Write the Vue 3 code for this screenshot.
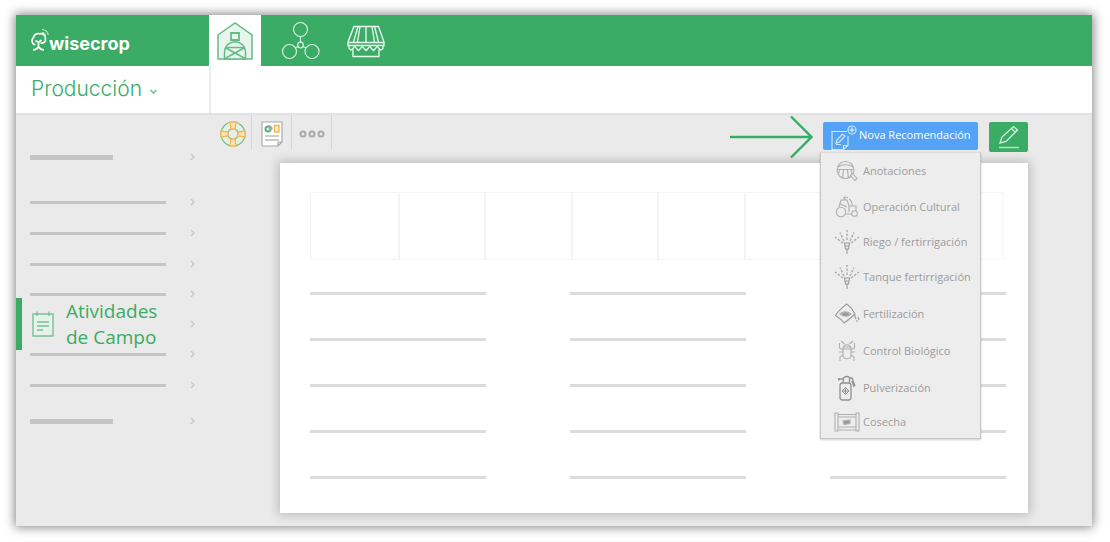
<script setup>
const entries = [
  { kind: 'thick' },
  { kind: 'thin' },
  { kind: 'thin' },
  { kind: 'thin' },
  { kind: 'thin' },
  { kind: 'active' },
  { kind: 'thin' },
  { kind: 'thin' },
  { kind: 'thick' },
]
const actions = [
  { label: 'Anotaciones', icon: 'notes' },
  { label: 'Operación Cultural', icon: 'tractor' },
  { label: 'Riego / fertirrigación', icon: 'spray' },
  { label: 'Tanque fertirrigación', icon: 'spray' },
  { label: 'Fertilización', icon: 'bag' },
  { label: 'Control Biológico', icon: 'bug' },
  { label: 'Pulverización', icon: 'bottle' },
  { label: 'Cosecha', icon: 'crate' },
]
</script>

<template>
  <div class="page">
    <div class="frame">
      <header class="top">
        <a href="#" class="brand">
          <svg width="18" height="24" viewBox="0 0 18 24" fill="none" stroke="#fff" stroke-width="1.7">
            <path d="M4.500 16.500H2.800C.5 14.500 .5 11 2.500 9.500C3 6.500 6 5 8.500 5.800C12 5 15 8 14.300 10.500C15.500 13.500 12.500 15.500 9.500 15" />
            <path d="M4.500 12.500L7.500 14.500L10.500 12M7.500 14V19M2 21.800C5 21.800 6.500 20.500 7.500 18.500C8.500 20.500 10 21.800 13 21.800" />
            <path d="M11 4.500C13 4.500 14.500 6 14.500 7.500M11 1.500C14.500 1.500 17.200 4 17.200 7" stroke-width="1.200" opacity=".7" />
          </svg>
          <span>wisecrop</span>
        </a>
        <nav class="tabs">
          <a href="#" class="tab current" aria-label="Granja">
            <svg width="36" height="40" viewBox="0 0 36 40" fill="#e8f5ed" stroke="#65bc87" stroke-width="1.500">
              <path d="M1 14L18 2L35 14V38H1Z" />
              <path d="M14 12H22V19H14Z" stroke-width="1.800" />
              <path d="M7.500 38V32C7.500 17 28.500 17 28.500 32V38Z" />
              <path d="M9 26.500H27M9 27L28 37.500M27 27L8 37.500" />
            </svg>
          </a>
          <a href="#" class="tab" aria-label="Red">
            <svg width="40" height="40" viewBox="0 0 40 40" fill="none" stroke="#d8f0e1" stroke-width="1.200">
              <circle cx="20.500" cy="8.500" r="7" /><circle cx="9.500" cy="30.500" r="7" /><circle cx="32" cy="30.500" r="7" />
              <circle cx="20.500" cy="24" r="2.800" /><path d="M20.500 15.500V21M18 25.500L15 27M23 25.500L26 27" />
            </svg>
          </a>
          <a href="#" class="tab" aria-label="Mercado">
            <svg width="38" height="34" viewBox="0 0 38 34" fill="none" stroke="#e6f6ec" stroke-width="1.400">
              <path d="M7 2.500H31.500L37 18V21.500H1V18ZM1.500 18.500H36.500M13 2.500L10.500 18M19 2.500V18M25 2.500L27.500 18M11 2.500L6.500 18M27.500 2.500L31.500 18" />
              <path d="M2 21.500V24.500L4 26L6 24.500C7.500 22 8 22 9.500 24.500L11.500 26.500L13.500 24.500C15 22 15.500 22 17 24.500L19 26.500L21 24.500C22.500 22 23 22 24.500 24.500L26.500 26.500L28.500 24.500C30 22 30.500 22 32 24.500L34 26L36 24.500V21.500M6 25.500V32.500H32V25.500" />
            </svg>
          </a>
        </nav>
      </header>

      <div class="section">
        <button class="area" type="button">
          <span>Producción</span>
          <svg width="9" height="6" viewBox="0 0 9 6" fill="none" stroke="#76c695" stroke-width="1.700"><path d="M1.500 1L4.500 4L7.500 1" /></svg>
        </button>
      </div>

      <div class="body">
        <aside class="side">
          <ul>
            <li v-for="(e, i) in entries" :key="i" :class="e.kind">
              <a v-if="e.kind === 'active'" href="#" class="selected">
                <svg width="22" height="26" viewBox="0 0 22 26" fill="#e6f2e9" stroke="#78c294" stroke-width="1.400">
                  <path d="M1 3H21V25H1Z" /><path d="M5 .5V5M17 .5V5" />
                  <path d="M5 11H17M5 15H17M5 19H11" />
                </svg>
                <span>Atividades<br />de Campo</span>
              </a>
              <span v-else class="bar"></span>
              <svg class="chev" width="5" height="8" viewBox="0 0 5 8" fill="none" stroke="#c9c9c9" stroke-width="1.500"><path d="M1 1L4 4L1 7" /></svg>
            </li>
          </ul>
        </aside>

        <main class="main">
          <div class="toolbar">
            <button class="tool" type="button" aria-label="Ayuda">
              <svg width="26" height="26" viewBox="0 0 26 26" fill="none" stroke="#72be8d" stroke-width="1.200">
                <circle cx="13" cy="13" r="12" fill="#e5f0e5" /><circle cx="13" cy="13" r="5.300" fill="#ebebeb" />
                <g fill="#fbe5bd" stroke="#f9b64d" stroke-width="1.300">
                  <path d="M10 1H16L15 8H11ZM10 25H16L15 18H11ZM1 10V16L8 15V11ZM25 10V16L18 15V11Z" />
                </g>
              </svg>
            </button>
            <button class="tool" type="button" aria-label="Informe">
              <svg width="22" height="26" viewBox="0 0 22 26" fill="none" stroke="#aaa" stroke-width="1.200">
                <path d="M1 1H21V21L17 25H1ZM21 21H17V25" fill="#fff" />
                <circle cx="7" cy="8" r="2.500" stroke="#4bb574" stroke-width="2" /><path d="M8 4.500A4 4 0 0 1 11 8H8Z" fill="#999" />
                <path d="M13.500 4.500H18V11H13.500Z" fill="#fff2da" stroke="#f7b64e" stroke-width="1.500" />
                <path d="M4 15H18M4 19H18" stroke="#999" />
              </svg>
            </button>
            <button class="tool" type="button" aria-label="Más">
              <svg width="26" height="8" viewBox="0 0 26 8" fill="none" stroke="#aaa" stroke-width="2"><circle cx="4" cy="4" r="2.500" /><circle cx="13" cy="4" r="2.500" /><circle cx="22" cy="4" r="2.500" /></svg>
            </button>
            <div class="right">
              <svg class="arrow" width="83" height="44" viewBox="0 0 83 44" fill="none" stroke="#35ae65" stroke-width="2.400"><path d="M0 22H81M61 1.500L81.500 22L61 42.500" /></svg>
              <div class="drop">
                <button class="new" type="button" aria-expanded="true">
                  <svg width="26" height="26" viewBox="0 0 26 26" fill="none" stroke="#cfe4fb" stroke-width="1.200">
                    <path d="M16 6.500H1V24.500H12.500L17 20.500V11M12.500 24.500V20.500H17" />
                    <path d="M6 15L11.500 9L14 11L8.500 17L5 18ZM5 19.500H10" />
                    <circle cx="21" cy="5" r="4" /><path d="M18.500 5H23.500M21 2.500V7.500" stroke-width="1.500" />
                  </svg>
                  <span>Nova Recomendación</span>
                </button>
                <ul class="menu">
                  <li v-for="a in actions" :key="a.label" :class="a.icon">
                    <a href="#">
                      <svg width="26" height="26" viewBox="0 0 26 26" fill="none" stroke="#b0b0b0" stroke-width="1.100">
                        <g v-if="a.icon === 'notes'">
                          <circle cx="11.500" cy="12" r="8.500" /><path d="M3 11.500H20M5.500 12L4.500 16.500M9.500 12L8.500 20M13.500 12L14.500 20M17 12L18 16M4 9C8 6 15 6 19 9" />
                          <path d="M16.500 17.500L18.500 15.500L23 20.500L21 22.500Z" fill="#ededed" />
                        </g>
                        <g v-else-if="a.icon === 'tractor'">
                          <circle cx="7" cy="18" r="4.700" /><circle cx="20.500" cy="19.500" r="2.800" />
                          <path d="M12 20H17.500M5 13L7 6H13L15 12H22V17M15 12V18M6.500 10L13 13M12 6C8 3 10 2 14 4M15 5C17 6 18 8 18.500 12" />
                        </g>
                        <g v-else-if="a.icon === 'spray'">
                          <path d="M10.500 14H15.500L14.500 20H11.500ZM13 20V25M11 17H15" stroke="#999" />
                          <path d="M13 11V1M10 12L6 3.500M16 12L20 3.500M9 14L1 8M17 14L25 8" stroke="#aaa" stroke-width="1.400" stroke-dasharray="2.500 1.500" />
                        </g>
                        <g v-else-if="a.icon === 'bag'" stroke="#999">
                          <path d="M12.500 3C15 5 18 6 21 13C18 16 13 20 10 22C8 19 4 16 1.500 14.500C4 10 9 6 12.500 3Z" />
                          <path d="M6 13C10 9 14 11 17 13C13 17 9 15 6 13Z" stroke="#aaa" /><path d="M20.500 14L22 18M24 16L25 19M22 20H24" /><ellipse cx="11.500" cy="13" rx="3" ry="1.200" fill="#999" />
                        </g>
                        <g v-else-if="a.icon === 'bug'">
                          <path d="M9 9H17V17C17 22 9 22 9 17ZM10 9C10 6 16 6 16 9M10.500 6L7 3M15.500 6L19 3M9 12L5.500 10V5M17 12L20.500 10V5M9 14H5M17 14H21M9 17L6 19V23M17 17L20 19V23M9 11H17" />
                        </g>
                        <g v-else-if="a.icon === 'bottle'" stroke="#929292" stroke-width="1.300">
                          <rect x="6" y="8" width="11" height="17" rx="2.500" /><path d="M9 8L9.500 3C11 1 15 1 15.500 3V8M4 4H9.500M15.500 3H18L21 11M18 6L20 12M5 3V5.500" />
                          <path d="M11.500 13.500V18.500M9 16H14M11.500 12.500L15 16L11.500 19.500L8 16Z" stroke-width="1" />
                        </g>
                        <g v-else>
                          <path d="M1 4H4V22H1ZM22 4H25V22H22ZM4 5.500H22M4 8H22M4 18H22M4 21H22" /><path d="M9 12L16 11V14.500L10 15.500Z" fill="#999" />
                        </g>
                      </svg>
                      <span>{{ a.label }}</span>
                    </a>
                  </li>
                </ul>
              </div>
              <button class="edit" type="button" aria-label="Editar">
                <svg width="22" height="24" viewBox="0 0 22 24" fill="none" stroke="#d4f0df" stroke-width="1.300"><path d="M2 18L4 12L15.500 1.500L19.500 5L8 16.500ZM13.500 3.500L17.500 7.500" /><path d="M1 22.500H21" stroke-width="1.500" opacity=".8" /></svg>
              </button>
            </div>
          </div>

          <section class="card">
            <div class="cells"><span v-for="n in 8" :key="n"></span></div>
            <div class="lines"><span v-for="n in 15" :key="n"></span></div>
          </section>
        </main>
      </div>
    </div>
  </div>
</template>

<style>
body { margin: 0; background: #fff; }
</style>

<style scoped>
* { box-sizing: border-box; }
ul { list-style: none; margin: 0; padding: 0; }
a { color: inherit; text-decoration: none; }
button { border: 0; padding: 0; margin: 0; background: none; font: inherit; color: inherit; cursor: pointer; }
svg { display: block; flex: none; }
.page { min-height: 100vh; padding: 15px 18px 16px 16px; display: flex; }
.frame {
  flex: 1;
  min-width: 0;
  display: flex;
  flex-direction: column;
  background: #eaeaea;
  box-shadow: 0 0 10px 1px rgba(0, 0, 0, .5);
  font-family: "Open Sans", "Noto Sans", sans-serif;
}
.top { display: flex; height: 51px; background: #3aac66; }
.brand { width: 193px; padding: 0 0 2px 15px; display: flex; align-items: center; color: #fff; font: 700 18px/24px Inter, sans-serif; }
.brand span { padding-top: 8px; }
.tabs { display: flex; }
.tab { width: 66px; display: flex; align-items: center; justify-content: center; }
.tab.current { width: 52px; margin-right: 6px; background: #fff; }
.section { height: 49px; background: #fff; border-bottom: 2px solid #e2e2e2; display: flex; }
.area { width: 195px; border-right: 2px solid #ececec; padding: 0 0 2px 15px; display: flex; align-items: center; gap: 7px; color: #3aac66; font: 300 21px/24px Inter, sans-serif; }
.area svg { margin-top: 6px; }
.body { flex: 1; display: flex; }
.side { width: 194px; flex: none; padding-top: 27px; }
.side ul { display: grid; grid-template-rows: 45px 31px 31px 30px 30px 30px 31px 36px 30px; }
.side li { height: 30px; padding: 0 15px 0 14px; display: flex; align-items: center; justify-content: space-between; }
.bar { width: 136px; height: 3px; background: #c5c5c5; }
.thick .bar { width: 83px; height: 5px; }
.side .active { padding-left: 0; }
.selected { height: 52px; border-left: 6px solid #3aac66; padding-left: 10px; display: flex; align-items: center; gap: 12px; color: #3aac66; font-size: 19px; line-height: 26px; }
.main { flex: 1; min-width: 0; display: flex; flex-direction: column; padding: 0 64px 13px 0; }
.toolbar { height: 48px; display: flex; align-items: flex-start; }
.tool { width: 40px; height: 34px; padding-top: 3px; border-right: 1px solid #d8d8d8; display: flex; align-items: center; justify-content: center; }
.tool:first-child { width: 42px; padding-left: 5px; }
.right { margin-left: auto; display: flex; align-items: flex-start; padding-top: 7px; }
.arrow { margin: -7px 10px 0 0; }
.drop { position: relative; margin-right: 11px; }
.new { width: 155px; height: 28px; padding: 0 0 2px 8px; display: flex; align-items: center; gap: 2px; background: #54a3f6; border-radius: 2px; color: #fff; font-size: 11px; line-height: 16px; white-space: nowrap; }
.new svg { margin-top: 5px; }
.edit { width: 39px; height: 30px; display: flex; align-items: center; justify-content: center; background: #3aac66; border-radius: 2px; }
.menu { position: absolute; z-index: 2; top: 30px; left: -3px; width: 161px; background: #ededed; border: 1px solid #c6c6c6; border-top-color: #ddd; box-shadow: 0 1px 2px rgba(0, 0, 0, .2); color: #9c9c9c; font-size: 11px; line-height: 16px; }
.menu li { height: 37px; }
.menu .notes { height: 35px; }
.menu .spray:nth-child(3) { height: 33px; }
.menu .crate { height: 32px; }
.menu a { height: 100%; padding-left: 13px; display: flex; align-items: center; gap: 3px; white-space: nowrap; }
.card { flex: 1; margin-left: 70px; padding: 29px 22px 34px 30px; background: #fff; box-shadow: 0 0 10px 2px rgba(0, 0, 0, .2); }
.cells { height: 68px; margin-right: 2px; display: grid; grid-template-columns: repeat(8, 1fr); border: 1px solid #f5f5f5; }
.cells span + span { border-left: 2px solid #f3f3f3; }
.lines { margin-top: 32px; display: grid; grid-template-columns: repeat(3, 1fr); gap: 43px 84px; }
.lines span { height: 3px; background: #dcdcdc; }
</style>
